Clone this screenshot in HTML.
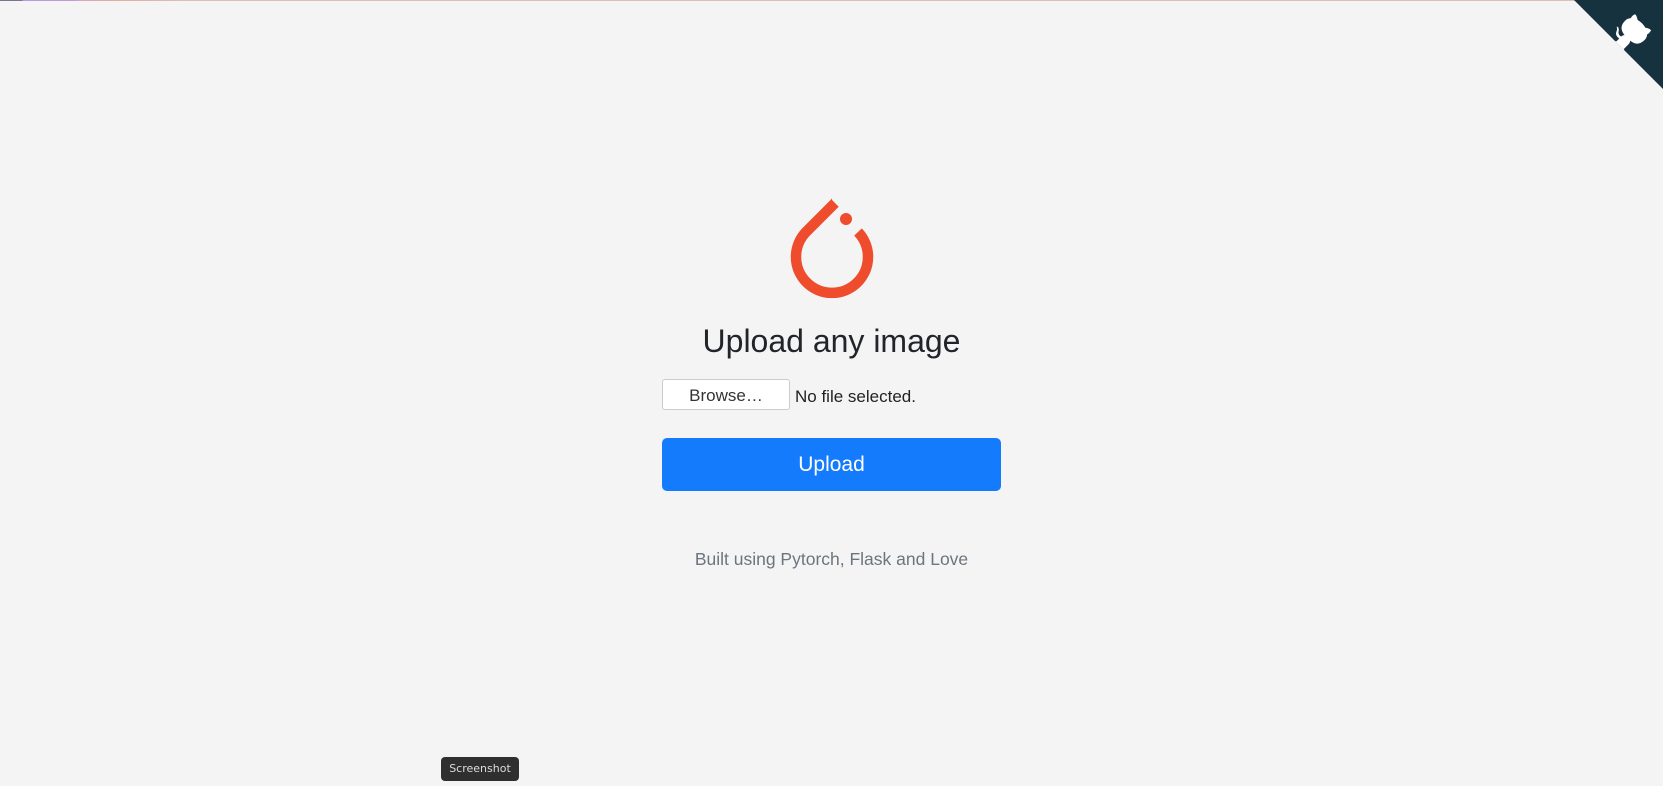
<!DOCTYPE html>
<html><head><meta charset="utf-8"><style>
html,body{margin:0;padding:0;width:1663px;height:786px;overflow:hidden;background:#f4f4f4;font-family:"Liberation Sans",sans-serif;}
.top{position:absolute;left:0;top:0;width:1663px;height:1px;background:linear-gradient(90deg,#7a7490 0,#7a7490 22px,#b99ae0 23px,#c49ad8 75px,#e0a0b8 80px,#e0aea0 115px,#dcc0b8 200px,#dcc0b8 100%);}
h1{position:absolute;left:0;width:1663px;top:323px;margin:0;text-align:center;font-weight:400;font-size:32px;color:#212529;}
.browse{position:absolute;left:662px;top:379px;width:126px;height:29px;border:1px solid #ccc;border-radius:3px;background:#fff;font-size:17px;color:#333;text-align:center;line-height:32px;box-sizing:content-box}
.nofile{position:absolute;left:795px;top:387px;font-size:17px;color:#222;}
.btn{position:absolute;left:662px;top:438px;width:339px;height:53px;background:#147bfd;border-radius:5px;color:#fff;font-size:21px;text-align:center;line-height:54px;}
.foot{position:absolute;left:0;width:1663px;top:549px;text-align:center;font-size:17.5px;color:#6c757d;}
.tip{position:absolute;left:441px;top:757px;width:78px;height:24px;background:#2f2f2f;border-radius:4px;color:#ddd;font-family:"DejaVu Sans",sans-serif;font-size:11px;text-align:center;line-height:24px;}
</style></head><body>
<div class="top"></div>
<svg style="position:absolute;left:1574px;top:0" width="89" height="89" viewBox="0 0 250 250">
<path d="M0,0 L250,250 L250,0 Z" fill="#17323f"/>
<path d="M128.3,109.0 C113.8,99.7 119.0,89.6 119.0,89.6 C122.0,82.7 120.5,78.6 120.5,78.6 C119.2,72.0 123.4,76.3 123.4,76.3 C127.3,80.9 125.5,87.3 125.5,87.3 C122.9,97.6 130.6,101.9 134.4,103.2" fill="#fff"/>
<path d="M115.0,115.0 C114.9,115.1 118.7,116.5 119.8,115.4 L133.7,101.6 C136.9,99.2 139.9,98.4 142.2,98.6 C133.8,88.0 127.5,74.4 143.8,58.0 C148.5,53.4 154.0,51.2 159.7,51.0 C160.3,49.4 163.2,43.6 171.4,40.1 C171.4,40.1 176.1,42.5 178.8,56.2 C183.1,58.6 187.2,61.8 190.9,65.4 C194.5,69.0 197.7,73.2 200.1,77.6 C213.8,80.2 216.3,84.9 216.3,84.9 C212.7,93.1 206.9,96.0 205.4,96.6 C205.1,102.4 203.0,107.8 198.3,112.5 C181.9,128.9 168.3,122.5 157.7,114.1 C157.9,116.9 156.7,120.9 152.7,124.9 L141.0,136.5 C139.8,137.7 141.6,141.9 141.8,141.8 Z" fill="#fff"/>
</svg>
<svg style="position:absolute;left:780px;top:190px" width="110" height="115" viewBox="0 0 110 115">
<path d="M55,13 L26,42 A36,36 0 1 0 78,42" fill="none" stroke="#ee4c2c" stroke-width="10.5"/>
<path d="M52,8 L52,22 L44,24 Z" fill="#ee4c2c"/>
<circle cx="66" cy="29" r="6" fill="#ee4c2c"/>
</svg>
<h1>Upload any image</h1>
<div class="browse">Browse…</div>
<div class="nofile">No file selected.</div>
<div class="btn">Upload</div>
<div class="foot">Built using Pytorch, Flask and Love</div>
<div class="tip">Screenshot</div>
</body></html>
